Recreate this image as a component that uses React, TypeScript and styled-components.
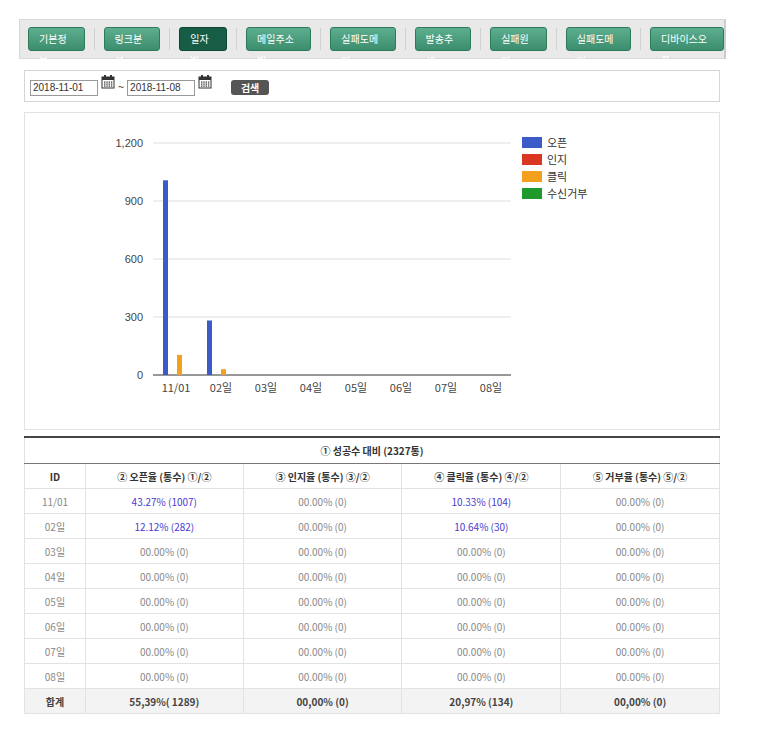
import styled, { createGlobalStyle } from 'styled-components';

const Global = createGlobalStyle`
  body { margin: 0; background: #fff; font-family: 'Noto Sans CJK KR', 'Noto Sans', sans-serif; font-size: 11px; color: #333; }
`;

const Page = styled.div`
  padding: 19px 37px 0 24px;
  width: 696px;
`;

const Nav = styled.div`
  display: flex;
  align-items: center;
  height: 38px;
  margin-left: -5px;
  padding-left: 8px;
  width: 696px;
  background: #e9e9e9;
  border: 1px solid #d8d8d8;
  border-right: 2px solid #ccc;
`;

const NavBtn = styled.div<{ active?: boolean }>`
  height: 22px;
  line-height: 22px;
  padding: 0 10px;
  border-radius: 3px;
  color: #fff;
  font-size: 10px;
  background: ${p => (p.active ? '#175c44' : 'linear-gradient(#5dae8f, #3c8d6d)')};
  border: 1px solid ${p => (p.active ? '#0f4533' : '#2f7a5b')};
`;

const Sep = styled.div`
  width: 1px;
  height: 22px;
  background: #d0d0d0;
  margin: 0 9px;
`;

const SearchBox = styled.div`
  margin-top: 11px;
  height: 30px;
  border: 1px solid #d6d6d6;
  display: flex;
  align-items: center;
  padding-left: 5px;
  gap: 3px;
`;

const DateInput = styled.div`
  width: 64px;
  height: 14px;
  border: 1px solid #999;
  font-family: 'Liberation Sans', sans-serif;
  font-size: 10px;
  line-height: 14px;
  padding-left: 2px;
  margin-top: 3px;
`;

const Cal = () => (
  <svg width="14" height="14" viewBox="0 0 14 14" style={{ marginTop: -8 }}>
    <rect x="1" y="2" width="12" height="11" fill="#fff" stroke="#333" />
    <rect x="1" y="2" width="12" height="3" fill="#333" />
    <rect x="3" y="0" width="2" height="3" fill="#333" />
    <rect x="9" y="0" width="2" height="3" fill="#333" />
    {[0, 1, 2].map(r => [0, 1, 2, 3].map(c => <rect key={r + '-' + c} x={3 + c * 2.3} y={6.5 + r * 2} width="1.4" height="1.2" fill="#333" />))}
  </svg>
);

const SearchBtn = styled.div`
  margin-left: 16px;
  margin-top: 2px;
  height: 15px;
  line-height: 15px;
  width: 38px;
  text-align: center;
  background: #555;
  color: #fff;
  border-radius: 3px;
  font-size: 10px;
  font-weight: bold;
`;

const ChartBox = styled.div`
  margin-top: 10px;
  height: 316px;
  border: 1px solid #e2e2e2;
`;

const Table = styled.table`
  margin-top: 6px;
  width: 696px;
  border-collapse: collapse;
  border-top: 2px solid #444;
  border-left: 1px solid #ddd;
  border-right: 1px solid #ddd;
  font-size: 10px;
  td, th { border: 1px solid #e2e2e2; height: 24px; text-align: center; padding: 0; }
  th { font-weight: bold; color: #333; }
`;

const Title = styled.th`
  border-bottom: 1px solid #777 !important;
  height: 25px !important;
`;

const Cell = styled.td<{ hi?: boolean }>`
  color: ${p => (p.hi ? '#4b3ad0' : '#888')};
`;

const SumRow = styled.tr`
  background: #f3f3f3;
  td { font-weight: bold; color: #444; }
`;

const Legend = ['오픈', '인지', '클릭', '수신거부'];
const colors = ['#3b5bc9', '#d9371f', '#f4a01f', '#1e9a2c'];

function Chart() {
  const y0 = 262, k = 232 / 1200;
  const cats = ['11/01', '02일', '03일', '04일', '05일', '06일', '07일', '08일'];
  return (
    <svg width="694" height="316">
      {[0, 300, 600, 900, 1200].map(v => (
        <g key={v}>
          <line x1="128" x2="486" y1={y0 - v * k} y2={y0 - v * k} stroke={v ? '#ddd' : '#333'} />
          <text x="118" y={y0 - v * k + 4} textAnchor="end" fontSize="11" fill="#444" fontFamily="Liberation Sans, sans-serif">{v.toLocaleString()}</text>
        </g>
      ))}
      {cats.map((c, i) => (
        <text key={c} x={151 + i * 45} y="279" textAnchor="middle" fontSize="11" fill="#444">{c}</text>
      ))}
      <rect x="138" y={y0 - 1007 * k} width="5" height={1007 * k} fill={colors[0]} />
      <rect x="152" y={y0 - 104 * k} width="5" height={104 * k} fill={colors[2]} />
      <rect x="182" y={y0 - 282 * k} width="5" height={282 * k} fill={colors[0]} />
      <rect x="196" y={y0 - 30 * k} width="5" height={30 * k} fill={colors[2]} />
      {Legend.map((l, i) => (
        <g key={l}>
          <rect x="497" y={30 + i * 17 - 6} width="20" height="11" fill={colors[i]} />
          <text x="522" y={30 + i * 17 + 4} fontSize="11" fill="#333">{l}</text>
        </g>
      ))}
    </svg>
  );
}

const navItems = ['기본정보', '링크분석', '일자별', '메일주소별', '실패도메인', '발송추세', '실패원인', '실패도메인', '디바이스오픈'];
const days = ['02일', '03일', '04일', '05일', '06일', '07일', '08일'];
const z = '00.00% (0)';

export default function App() {
  return (
    <Page>
      <Global />
      <Nav>
        {navItems.map((n, i) => (
          <span key={i} style={{ display: 'contents' }}>
            {i > 0 && <Sep />}
            <NavBtn active={i === 2}>{n}</NavBtn>
          </span>
        ))}
      </Nav>
      <SearchBox>
        <DateInput>2018-11-01</DateInput>
        <Cal />
        <span>~</span>
        <DateInput>2018-11-08</DateInput>
        <Cal />
        <SearchBtn>검색</SearchBtn>
      </SearchBox>
      <ChartBox><Chart /></ChartBox>
      <Table>
        <colgroup>
          <col style={{ width: 61 }} /><col style={{ width: 158 }} /><col style={{ width: 159 }} /><col style={{ width: 159 }} /><col style={{ width: 159 }} />
        </colgroup>
        <tbody>
          <tr><Title colSpan={5}>① 성공수 대비 (2327통)</Title></tr>
          <tr><th>ID</th><th>② 오픈율 (통수) ①/②</th><th>③ 인지율 (통수) ③/②</th><th>④ 클릭율 (통수) ④/②</th><th>⑤ 거부율 (통수) ⑤/②</th></tr>
          <tr><Cell>11/01</Cell><Cell hi>43.27% (1007)</Cell><Cell>{z}</Cell><Cell hi>10.33% (104)</Cell><Cell>{z}</Cell></tr>
          {days.map((d, i) => (
            <tr key={d}>
              <Cell>{d}</Cell>
              <Cell hi={i === 0}>{i === 0 ? '12.12% (282)' : z}</Cell>
              <Cell>{z}</Cell>
              <Cell hi={i === 0}>{i === 0 ? '10.64% (30)' : z}</Cell>
              <Cell>{z}</Cell>
            </tr>
          ))}
          <SumRow><td>합계</td><td>55,39%( 1289)</td><td>00,00% (0)</td><td>20,97% (134)</td><td>00,00% (0)</td></SumRow>
        </tbody>
      </Table>
    </Page>
  );
}
